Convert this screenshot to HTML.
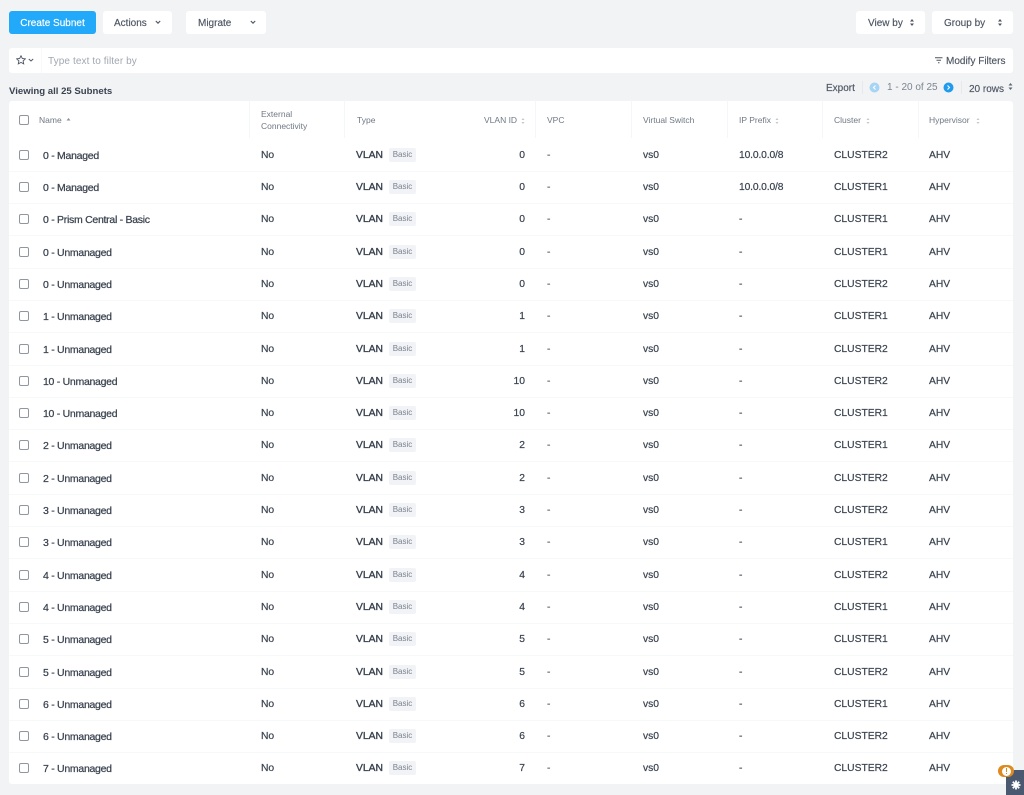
<!DOCTYPE html>
<html><head><meta charset="utf-8"><style>
html,body{margin:0;padding:0;width:1024px;height:795px;overflow:hidden;background:#f2f3f5;font-family:"Liberation Sans",sans-serif;color:#3a4350}
body{filter:blur(.3px)}
.a{position:absolute;white-space:nowrap}
.btn{position:absolute;background:#fff;border-radius:3px;height:23px;top:11px;font-size:10px;line-height:25px;color:#4c5562;-webkit-text-stroke:.15px}
.t{position:absolute;left:9px;top:101px;width:1004px;height:683px;background:#fff;border-radius:3px}
.h{position:absolute;font-size:8.5px;color:#6f7885;line-height:12px;white-space:nowrap}
.v{position:absolute;top:100px;width:1px;height:38px;background:#f5f6f7}
.r{position:absolute;left:9px;width:1004px;height:32px;font-size:10.3px;line-height:16px;color:#3a4350;-webkit-text-stroke:.2px}
.r span{position:absolute;top:9px;white-space:nowrap}
.r i{position:absolute;left:10px;top:11px;width:7.500px;height:7.500px;border:1px solid #8f96a0;border-radius:2px;background:#fff}
.r b{position:absolute;left:380px;top:9px;width:27px;height:14px;background:#f2f3f6;border-radius:2px;color:#7a828e;font-weight:normal;font-size:8px;line-height:14px;text-align:center;-webkit-text-stroke:0}
.r u{position:absolute;left:0;right:0;bottom:-1px;height:1px;background:#f7f8f9}
.r span.n{left:34px;font-size:10.5px;letter-spacing:-.28px;-webkit-text-stroke:.25px}.c{left:252px}.y{left:347px;font-size:10.300px;-webkit-text-stroke:.35px}.i{right:488px}.p{left:538px;color:#555e6a}.s{left:634px}.f{left:730px;letter-spacing:-.15px}.u{left:825px}.w{left:920px}
</style></head><body>
<div class="btn" style="left:9px;width:87px;background:#23a9f9;color:#fff;text-align:center">Create Subnet</div>
<div class="btn" style="left:103px;width:69px"><span style="margin-left:11px">Actions</span></div>
<svg class="a" style="left:155px;top:20px" width="6" height="5"><path d="M.8 1l2.2 2.2L5.200 1" fill="none" stroke="#4c5562" stroke-width="1.100"/></svg>
<div class="btn" style="left:186px;width:80px"><span style="margin-left:12px">Migrate</span></div>
<svg class="a" style="left:250px;top:20px" width="6" height="5"><path d="M.8 1l2.2 2.2L5.200 1" fill="none" stroke="#4c5562" stroke-width="1.100"/></svg>
<div class="btn" style="left:856px;width:69px"><span style="margin-left:12px">View by</span></div>
<div class="btn" style="left:932px;width:81px"><span style="margin-left:12px">Group by</span></div>
<svg class="a" style="left:909px;top:19px" width="6" height="8"><path d="M3 0l2 2.500H1zM3 7l2-2.500H1z" fill="#4c5562"/></svg>
<svg class="a" style="left:997px;top:19px" width="6" height="8"><path d="M3 0l2 2.500H1zM3 7l2-2.500H1z" fill="#4c5562"/></svg>

<div class="a" style="left:9px;top:48px;width:1004px;height:25px;background:#fff;border-radius:3px"></div>
<div class="a" style="left:41px;top:48px;width:1px;height:25px;background:#f8f9fa"></div>
<svg class="a" style="left:16px;top:55px" width="10" height="10" viewBox="0 0 10 10"><path d="M5 .8l1.300 2.700 3 .4-2.200 2 .6 3L5 7.400 2.300 8.900l.6-3-2.200-2 3-.4z" fill="none" stroke="#4c5562" stroke-width=".9"/></svg>
<svg class="a" style="left:28px;top:58px" width="6" height="5"><path d="M.8 1l2.200 2L5.200 1" fill="none" stroke="#4c5562"/></svg>
<div class="a" style="left:48px;top:55px;font-size:10px;line-height:13px;color:#a0a7b1;letter-spacing:.1px">Type text to filter by</div>
<svg class="a" style="left:935px;top:57px" width="8" height="7"><path d="M0 .7h7.500M1.500 3.200h4.500M3 5.700h1.500" stroke="#4c5562" stroke-width="1"/></svg>
<div class="a" style="left:946px;top:55px;font-size:10px;line-height:13px;color:#4c5562;-webkit-text-stroke:.15px">Modify Filters</div>

<div class="a" style="left:9px;top:85px;font-size:9.600px;line-height:13px;font-weight:bold;color:#3a4350">Viewing all 25 Subnets</div>
<div class="a" style="left:826px;top:82px;font-size:10px;line-height:13px;color:#4c5562;-webkit-text-stroke:.15px">Export</div>
<div class="a" style="left:862px;top:81px;width:1px;height:13px;background:#e6e8eb"></div>
<svg class="a" style="left:869px;top:82px" width="11" height="11"><circle cx="5.500" cy="5.500" r="5" fill="#a6d4f5"/><path d="M6.500 3.500l-2 2 2 2" fill="none" stroke="#fff" stroke-width="1.100"/></svg>
<div class="a" style="left:887px;top:81px;font-size:10px;line-height:13px;color:#7d8590">1 - 20 of 25</div>
<svg class="a" style="left:943px;top:82px" width="11" height="11"><circle cx="5.500" cy="5.500" r="5" fill="#1f9bee"/><path d="M4.500 3.500l2 2-2 2" fill="none" stroke="#fff" stroke-width="1.100"/></svg>
<div class="a" style="left:961px;top:81px;width:1px;height:13px;background:#e6e8eb"></div>
<div class="a" style="left:969px;top:83px;font-size:10px;line-height:13px;color:#4c5562;-webkit-text-stroke:.15px">20 rows</div>
<svg class="a" style="left:1008px;top:83px" width="5" height="8"><path d="M2.500 0l2 2.500H.5zM2.500 7l2-2.500H.5z" fill="#5c6470"/></svg>

<div class="t"></div>
<div class="a" style="left:19px;top:115px;width:7.500px;height:7.500px;border:1px solid #8f96a0;border-radius:2px;background:#fff"></div>
<div class="h" style="left:39px;top:114px">Name</div>
<svg class="a" style="left:66px;top:118px" width="5" height="4"><path d="M2.500 0l2 2.500H.5z" fill="#8a919c"/></svg>
<div class="h" style="left:261px;top:108px">External</div>
<div class="h" style="left:261px;top:120px">Connectivity</div>
<div class="h" style="left:357px;top:114px">Type</div>
<div class="h" style="left:484px;top:114px">VLAN ID</div>
<div class="h" style="left:547px;top:114px">VPC</div>
<div class="h" style="left:643px;top:114px">Virtual Switch</div>
<div class="h" style="left:739px;top:114px">IP Prefix</div>
<div class="h" style="left:834px;top:114px">Cluster</div>
<div class="h" style="left:929px;top:114px">Hypervisor</div>
<svg class="a" style="left:521px;top:118px" width="4" height="6"><path d="M2 0l1.500 2H.5zM2 6l1.500-2H.5z" fill="#c4c8ce"/></svg>
<svg class="a" style="left:775px;top:118px" width="4" height="6"><path d="M2 0l1.500 2H.5zM2 6l1.500-2H.5z" fill="#c4c8ce"/></svg>
<svg class="a" style="left:866px;top:118px" width="4" height="6"><path d="M2 0l1.500 2H.5zM2 6l1.500-2H.5z" fill="#c4c8ce"/></svg>
<svg class="a" style="left:976px;top:118px" width="4" height="6"><path d="M2 0l1.500 2H.5zM2 6l1.500-2H.5z" fill="#c4c8ce"/></svg>
<div class="v" style="left:249px"></div><div class="v" style="left:344px"></div><div class="v" style="left:535px"></div><div class="v" style="left:631px"></div><div class="v" style="left:727px"></div><div class="v" style="left:822px"></div><div class="v" style="left:918px"></div>

<div class="r" style="top:139px"><i></i><span class="n">0 - Managed</span><span class="c">No</span><span class="y">VLAN</span><b>Basic</b><span class="i">0</span><span class="p">-</span><span class="s">vs0</span><span class="f">10.0.0.0/8</span><span class="u">CLUSTER2</span><span class="w">AHV</span><u></u></div>
<div class="r" style="top:171px"><i></i><span class="n">0 - Managed</span><span class="c">No</span><span class="y">VLAN</span><b>Basic</b><span class="i">0</span><span class="p">-</span><span class="s">vs0</span><span class="f">10.0.0.0/8</span><span class="u">CLUSTER1</span><span class="w">AHV</span><u></u></div>
<div class="r" style="top:203px"><i></i><span class="n">0 - Prism Central - Basic</span><span class="c">No</span><span class="y">VLAN</span><b>Basic</b><span class="i">0</span><span class="p">-</span><span class="s">vs0</span><span class="f">-</span><span class="u">CLUSTER1</span><span class="w">AHV</span><u></u></div>
<div class="r" style="top:236px"><i></i><span class="n">0 - Unmanaged</span><span class="c">No</span><span class="y">VLAN</span><b>Basic</b><span class="i">0</span><span class="p">-</span><span class="s">vs0</span><span class="f">-</span><span class="u">CLUSTER1</span><span class="w">AHV</span><u></u></div>
<div class="r" style="top:268px"><i></i><span class="n">0 - Unmanaged</span><span class="c">No</span><span class="y">VLAN</span><b>Basic</b><span class="i">0</span><span class="p">-</span><span class="s">vs0</span><span class="f">-</span><span class="u">CLUSTER2</span><span class="w">AHV</span><u></u></div>
<div class="r" style="top:300px"><i></i><span class="n">1 - Unmanaged</span><span class="c">No</span><span class="y">VLAN</span><b>Basic</b><span class="i">1</span><span class="p">-</span><span class="s">vs0</span><span class="f">-</span><span class="u">CLUSTER1</span><span class="w">AHV</span><u></u></div>
<div class="r" style="top:333px"><i></i><span class="n">1 - Unmanaged</span><span class="c">No</span><span class="y">VLAN</span><b>Basic</b><span class="i">1</span><span class="p">-</span><span class="s">vs0</span><span class="f">-</span><span class="u">CLUSTER2</span><span class="w">AHV</span><u></u></div>
<div class="r" style="top:365px"><i></i><span class="n">10 - Unmanaged</span><span class="c">No</span><span class="y">VLAN</span><b>Basic</b><span class="i">10</span><span class="p">-</span><span class="s">vs0</span><span class="f">-</span><span class="u">CLUSTER2</span><span class="w">AHV</span><u></u></div>
<div class="r" style="top:397px"><i></i><span class="n">10 - Unmanaged</span><span class="c">No</span><span class="y">VLAN</span><b>Basic</b><span class="i">10</span><span class="p">-</span><span class="s">vs0</span><span class="f">-</span><span class="u">CLUSTER1</span><span class="w">AHV</span><u></u></div>
<div class="r" style="top:429px"><i></i><span class="n">2 - Unmanaged</span><span class="c">No</span><span class="y">VLAN</span><b>Basic</b><span class="i">2</span><span class="p">-</span><span class="s">vs0</span><span class="f">-</span><span class="u">CLUSTER1</span><span class="w">AHV</span><u></u></div>
<div class="r" style="top:462px"><i></i><span class="n">2 - Unmanaged</span><span class="c">No</span><span class="y">VLAN</span><b>Basic</b><span class="i">2</span><span class="p">-</span><span class="s">vs0</span><span class="f">-</span><span class="u">CLUSTER2</span><span class="w">AHV</span><u></u></div>
<div class="r" style="top:494px"><i></i><span class="n">3 - Unmanaged</span><span class="c">No</span><span class="y">VLAN</span><b>Basic</b><span class="i">3</span><span class="p">-</span><span class="s">vs0</span><span class="f">-</span><span class="u">CLUSTER2</span><span class="w">AHV</span><u></u></div>
<div class="r" style="top:526px"><i></i><span class="n">3 - Unmanaged</span><span class="c">No</span><span class="y">VLAN</span><b>Basic</b><span class="i">3</span><span class="p">-</span><span class="s">vs0</span><span class="f">-</span><span class="u">CLUSTER1</span><span class="w">AHV</span><u></u></div>
<div class="r" style="top:559px"><i></i><span class="n">4 - Unmanaged</span><span class="c">No</span><span class="y">VLAN</span><b>Basic</b><span class="i">4</span><span class="p">-</span><span class="s">vs0</span><span class="f">-</span><span class="u">CLUSTER2</span><span class="w">AHV</span><u></u></div>
<div class="r" style="top:591px"><i></i><span class="n">4 - Unmanaged</span><span class="c">No</span><span class="y">VLAN</span><b>Basic</b><span class="i">4</span><span class="p">-</span><span class="s">vs0</span><span class="f">-</span><span class="u">CLUSTER1</span><span class="w">AHV</span><u></u></div>
<div class="r" style="top:623px"><i></i><span class="n">5 - Unmanaged</span><span class="c">No</span><span class="y">VLAN</span><b>Basic</b><span class="i">5</span><span class="p">-</span><span class="s">vs0</span><span class="f">-</span><span class="u">CLUSTER1</span><span class="w">AHV</span><u></u></div>
<div class="r" style="top:656px"><i></i><span class="n">5 - Unmanaged</span><span class="c">No</span><span class="y">VLAN</span><b>Basic</b><span class="i">5</span><span class="p">-</span><span class="s">vs0</span><span class="f">-</span><span class="u">CLUSTER2</span><span class="w">AHV</span><u></u></div>
<div class="r" style="top:688px"><i></i><span class="n">6 - Unmanaged</span><span class="c">No</span><span class="y">VLAN</span><b>Basic</b><span class="i">6</span><span class="p">-</span><span class="s">vs0</span><span class="f">-</span><span class="u">CLUSTER1</span><span class="w">AHV</span><u></u></div>
<div class="r" style="top:720px"><i></i><span class="n">6 - Unmanaged</span><span class="c">No</span><span class="y">VLAN</span><b>Basic</b><span class="i">6</span><span class="p">-</span><span class="s">vs0</span><span class="f">-</span><span class="u">CLUSTER2</span><span class="w">AHV</span><u></u></div>
<div class="r" style="top:752px"><i></i><span class="n">7 - Unmanaged</span><span class="c">No</span><span class="y">VLAN</span><b>Basic</b><span class="i">7</span><span class="p">-</span><span class="s">vs0</span><span class="f">-</span><span class="u">CLUSTER2</span><span class="w">AHV</span></div>

<div class="a" style="left:1006px;top:770px;width:18px;height:25px;background:#4a5870"></div>
<svg class="a" style="left:1011px;top:780px" width="10" height="10"><path d="M5 .5v9M.5 5h9M1.800 1.800l6.400 6.400M8.200 1.800L1.800 8.200" stroke="#fff" stroke-width="1.800"/></svg>
<div class="a" style="left:998px;top:765px;width:16px;height:12px;background:#dd8a1e;border-radius:6px"></div>
<div class="a" style="left:1002px;top:766.500px;width:9px;height:9px;background:#fff;border-radius:50%"></div>
<div class="a" style="left:1005.800px;top:767.500px;width:1.500px;height:4px;background:#dd8a1e"></div>
<div class="a" style="left:1005.800px;top:772.500px;width:1.500px;height:1.500px;background:#dd8a1e"></div>
</body></html>
